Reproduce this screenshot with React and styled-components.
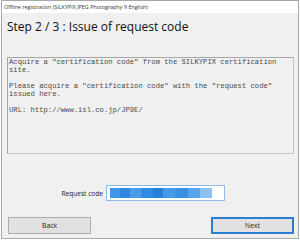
import React from "react";
import styled, { createGlobalStyle } from "styled-components";

const Global = createGlobalStyle`
  html, body { margin: 0; padding: 0; background: #ffffff; }
  body { font-family: "Liberation Sans", Arial, sans-serif; }
`;

const Page = styled.div`
  padding-left: 1px;
`;

const Window = styled.div`
  width: 298px;
  height: 239px;
  box-sizing: border-box;
  border: 1px solid #a8a8a8;
  background: #f0f0f0;
  display: flex;
  flex-direction: column;
`;

const TitleBar = styled.div`
  height: 12px;
  background: #ffffff;
  font-family: "Open Sans", "Liberation Sans", sans-serif;
  font-size: 5.4px;
  line-height: 12px;
  color: #333;
  padding-left: 2px;
  white-space: nowrap;
`;

const Heading = styled.div`
  margin: 6px 0 0 5px;
  height: 16px;
  font-family: "Open Sans", "Liberation Sans", sans-serif;
  font-size: 12px;
  line-height: 16px;
  color: #111;
  white-space: nowrap;
`;

const InfoBox = styled.div`
  margin: 22px 4px 0 5px;
  height: 97px;
  box-sizing: border-box;
  border: 1px solid #a6a6a6;
  border-right-color: #c4c4c4;
  border-bottom-color: #c4c4c4;
  padding: 0 0 0 1px;
  font-family: "Liberation Mono", "Courier New", monospace;
  font-size: 7.2px;
  line-height: 8px;
  color: #4a4a4a;
  white-space: pre-wrap;
`;

const CodeRow = styled.div`
  margin-top: 31px;
  display: flex;
  align-items: center;
  height: 16px;
`;

const Label = styled.div`
  width: 104px;
  text-align: right;
  padding-right: 3px;
  box-sizing: border-box;
  font-family: "Open Sans", "Liberation Sans", sans-serif;
  font-size: 6.6px;
  color: #222;
`;

const Input = styled.div`
  width: 119px;
  height: 16px;
  box-sizing: border-box;
  border: 1px solid #8fbbe8;
  background: #ffffff;
  padding: 2px 12px 2px 3px;
  display: flex;
`;

const Selection = styled.div`
  flex: 1;
  background: linear-gradient(
    90deg,
    #3f95e6 0 10%,
    #2f88df 10% 20%,
    #4b9de9 20% 30%,
    #348ce1 30% 42%,
    #2580da 42% 52%,
    #4599e7 52% 64%,
    #3990e3 64% 76%,
    #58a5ec 76% 88%,
    #8cc2f2 88% 100%
  );
`;

const ButtonRow = styled.div`
  margin: 16px 4px 0 6px;
  display: flex;
  justify-content: space-between;
`;

const Button = styled.div`
  width: 83px;
  height: 17px;
  box-sizing: border-box;
  border: ${(p) => (p.$primary ? "2px solid #2a7fd4" : "1px solid #adadad")};
  background: #e1e1e1;
  display: flex;
  align-items: center;
  justify-content: center;
  font-family: "Open Sans", "Liberation Sans", sans-serif;
  font-size: 6.8px;
  color: #222;
`;

const info = `Acquire a "certification code" from the SILKYPIX certification
site.

Please acquire a "certification code" with the "request code"
issued here.

URL: http://www.isl.co.jp/JP9E/`;

export default function App() {
  return (
    <Page>
      <Global />
      <Window>
        <TitleBar>Offline registration (SILKYPIX JPEG Photography 9 English)</TitleBar>
        <Heading>Step 2 / 3 : Issue of request code</Heading>
        <InfoBox>{info}</InfoBox>
        <CodeRow>
          <Label>Request code</Label>
          <Input>
            <Selection />
          </Input>
        </CodeRow>
        <ButtonRow>
          <Button>Back</Button>
          <Button $primary>Next</Button>
        </ButtonRow>
      </Window>
    </Page>
  );
}
